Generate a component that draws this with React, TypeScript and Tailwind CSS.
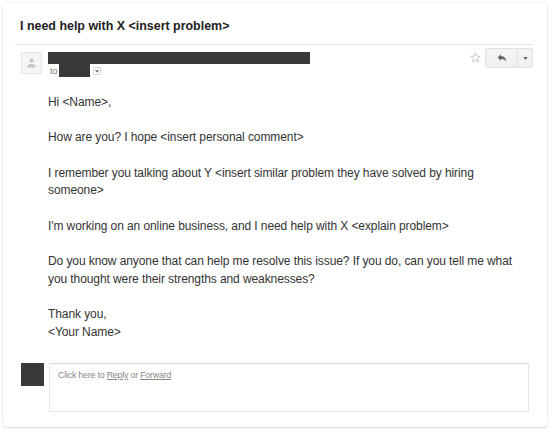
const paragraphs = [
  ['Hi <Name>,'],
  ['How are you? I hope <insert personal comment>'],
  ['I remember you talking about Y <insert similar problem they have solved by hiring', 'someone>'],
  ["I'm working on an online business, and I need help with X <explain problem>"],
  ['Do you know anyone that can help me resolve this issue? If you do, can you tell me what', 'you thought were their strengths and weaknesses?'],
  ['Thank you,', '<Your Name>'],
];

function Avatar() {
  return (
    <div className="mt-[7px] flex h-[22px] w-[21px] shrink-0 items-center justify-center border border-[#e6e6e6] bg-[#f5f5f5]">
      <svg width="9" height="10" viewBox="0 0 9 10" fill="#c6c6c6">
        <circle cx="4.5" cy="2.6" r="2.1" />
        <path d="M0.4 9.4V8.2C0.4 6.6 3 6 4.5 6S8.6 6.6 8.6 8.2V9.4Z" />
      </svg>
    </div>
  );
}

function MessageHeader() {
  return (
    <div className="flex h-[46px] pl-1.5">
      <Avatar />
      <div className="ml-1.5 mt-[7px] flex w-[262px] flex-col">
        <div className="h-3 bg-[#393939]" />
        <div className="flex h-[13px] pl-0.5">
          <span className="w-[9px] pt-[2px] text-[8.8px] leading-[10px] text-[#777777]">to</span>
          <div className="w-[31px] bg-[#393939]" />
          <button className="ml-[3px] mt-[3px] flex h-2 w-2 items-center justify-center rounded-[1px] border border-[#d6d6d6] bg-white">
            <svg width="4" height="3" viewBox="0 0 4 3" fill="#666666">
              <path d="M0 0.3H4L2 2.7Z" />
            </svg>
          </button>
        </div>
      </div>
      <div className="ml-auto flex">
        <svg className="mr-[4px] mt-[7px]" width="11" height="11" viewBox="0 0 11 11" fill="none" stroke="#c4c4c4" strokeWidth="0.9">
          <path d="M5.5 0.9L6.8 4.1L10.3 4.3L7.6 6.5L8.5 9.9L5.5 8L2.5 9.9L3.4 6.5L0.7 4.3L4.2 4.1Z" />
        </svg>
        <div className="mt-[3px] flex h-5 w-[48px] rounded-[2px] border border-[#e2e2e2] bg-linear-to-b from-[#f5f5f5] to-[#f0f0f0]">
          <button className="flex w-8 items-center justify-center border-r border-[#e2e2e2]">
            <svg width="10" height="8" viewBox="0 0 10 8" fill="#666666">
              <path d="M4 0.2V2.1C7.3 2.3 9 4.2 9.4 7.6C8 5.7 6.6 5 4 5V6.8L0.6 3.5Z" />
            </svg>
          </button>
          <button className="flex flex-1 items-center justify-center">
            <svg width="5" height="3" viewBox="0 0 5 3" fill="#666666">
              <path d="M0.3 0H4.7L2.5 3Z" />
            </svg>
          </button>
        </div>
      </div>
    </div>
  );
}

function ReplyBox() {
  return (
    <div className="flex pl-1.5">
      <div className="h-[23px] w-[23px] bg-[#393939]" />
      <div className="ml-[5px] h-[49px] w-[480px] border border-[#e6e6e6] border-t-[#dadada] px-2 pt-[6px] text-[8.8px] leading-[10px] tracking-[-0.19px] text-[#888888]">
        Click here to <span className="underline">Reply</span> or <span className="underline">Forward</span>
      </div>
    </div>
  );
}

export default function App() {
  return (
    <div className="h-[430px] w-[550px] overflow-hidden bg-white px-[3px] pt-[3px] font-['Liberation_Sans',Arial,sans-serif]">
      <div className="h-[424px] w-[544px] rounded-[3px] bg-white px-3 shadow-[0_0_2px_rgba(0,0,0,0.12),0_1px_2px_rgba(0,0,0,0.12)]">
        <h1 className="h-[41px] pl-[5px] pt-[15px] text-[12.45px] font-bold leading-4 text-[#222222]">
          I need help with X &lt;insert problem&gt;
        </h1>
        <div className="w-[518px] border-t border-[#e5e5e5]">
          <MessageHeader />
        </div>
        <div className="flex h-[272px] flex-col gap-[17.7px] whitespace-nowrap pl-[33px] pt-[3px] text-[12px] leading-[17.7px] tracking-[-0.087px] text-[#333333]">
          {paragraphs.map((lines) => (
            <div key={lines[0]}>
              {lines.map((line) => (
                <p key={line}>{line}</p>
              ))}
            </div>
          ))}
        </div>
        <ReplyBox />
      </div>
    </div>
  );
}
